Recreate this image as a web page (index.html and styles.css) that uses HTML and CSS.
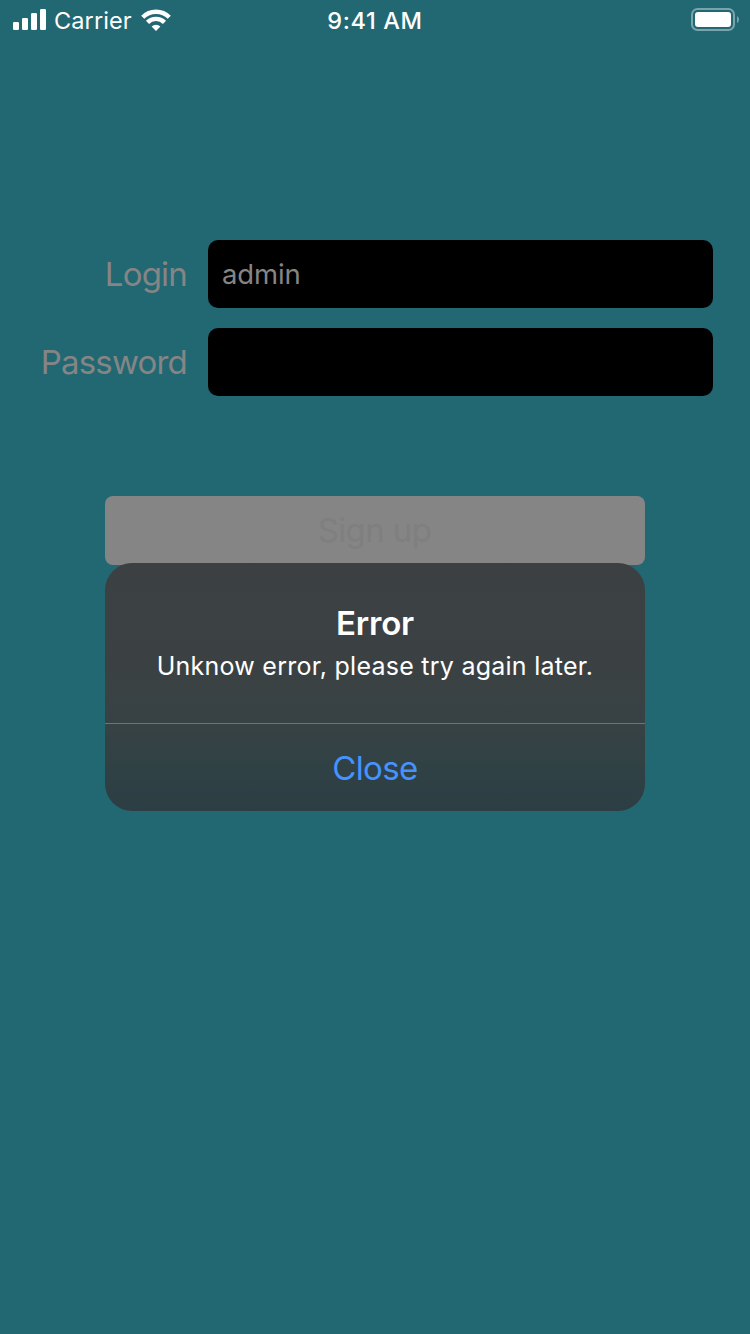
FILE: index.html
```html
<!DOCTYPE html>
<html lang="en">
<head>
<meta charset="utf-8">
<title>Sign up</title>
<link rel="stylesheet" href="styles.css">
</head>
<body>
<div class="screen">
  <header class="status">
    <div class="status-left">
      <svg class="signal" width="34" height="22" viewBox="0 0 34 22" fill="#fff">
        <rect x="0" y="13" width="6" height="8" rx="1.3"/>
        <rect x="9" y="9" width="6" height="12" rx="1.3"/>
        <rect x="18" y="4" width="6" height="17" rx="1.3"/>
        <rect x="27" y="0" width="6" height="21" rx="1.3"/>
      </svg>
      <span class="carrier">Carrier</span>
      <svg class="wifi" width="30" height="22" viewBox="0 0 30 22" fill="none" stroke="#fff" stroke-width="4.4">
        <path d="M1.7 8.2A18.8 18.8 0 0 1 28.3 8.2"/>
        <path d="M6.5 13.4A12 12 0 0 1 23.5 13.4"/>
        <path d="M15 22L10.6 17.6A6.2 6.2 0 0 1 19.4 17.6Z" fill="#fff" stroke="none"/>
      </svg>
    </div>
    <span class="time">9:41 AM</span>
    <svg class="battery" width="48" height="24" viewBox="0 0 48 24">
      <rect x="1" y="1" width="42" height="21" rx="5.5" fill="none" stroke="#7aa4ab" stroke-width="2"/>
      <rect x="4" y="4" width="36" height="15" rx="3" fill="#fff"/>
      <path d="M46 8Q48 9 48 11.5T46 15Z" fill="#7aa4ab"/>
    </svg>
  </header>
  <main class="form">
    <label class="label" for="login">Login</label>
    <input class="field" id="login" type="text" value="admin">
    <label class="label" for="password">Password</label>
    <input class="field" id="password" type="password">
  </main>
  <button class="signup" type="button">Sign up</button>
  <section class="alert" role="alertdialog">
    <div class="alert-body">
      <h1 class="alert-title">Error</h1>
      <p class="alert-message">Unknow error, please try again later.</p>
    </div>
    <button class="alert-close" type="button">Close</button>
  </section>
</div>
</body>
</html>
```
FILE: styles.css
```css
* { box-sizing: border-box; }
body { margin: 0; background: #226873; font-family: Inter, "Liberation Sans", sans-serif; }
.screen { position: relative; width: 750px; height: 1334px; overflow: hidden; display: flex; flex-direction: column; }
.status { height: 40px; display: grid; grid-template-columns: 1fr auto 1fr; align-items: center; color: #fff; font-size: 24px; line-height: 40px; }
.status-left { display: flex; align-items: center; padding-left: 13px; }
.signal, .wifi, .battery { margin-bottom: 2px; }
.carrier { margin-left: 7px; width: 80px; font-size: 23.5px; letter-spacing: 0.1px; white-space: nowrap; padding-top: 1px; }
.wifi { margin-left: 7px; }
.time { font-weight: 550; font-size: 23.5px; letter-spacing: 0.65px; padding-top: 1px; }
.battery { justify-self: end; margin-right: 11px; }
.form { margin-top: 200px; padding: 0 37px 0 0; display: grid; grid-template-columns: 187px 505px; column-gap: 21px; row-gap: 20px; }
.label { font-size: 33px; line-height: 69px; height: 68px; letter-spacing: -0.8px; text-align: right; color: #858585; }
.field { width: 505px; height: 68px; padding: 0 14px 1px; border: 0; border-radius: 10px; background: #000; color: #858585; font-family: inherit; font-size: 27.5px; letter-spacing: -0.15px; outline: 0; }
.signup { width: 540px; height: 69px; margin: 100px auto 0; padding: 0 1px 2px 0; border: 0; border-radius: 8px; background: #858585; color: #7f7f80; font-family: inherit; font-size: 33px; letter-spacing: -0.6px; }
.alert { position: absolute; left: 105px; top: 563px; width: 540px; height: 248px; border-radius: 27px; overflow: hidden; background: linear-gradient(#3c4042 0%, #3b4143 42%, #374244 65%, #2f4145 85%, #2c3e43 100%); color: #fff; }
.alert-body { height: 161px; padding-top: 40px; border-bottom: 1px solid #66797a; text-align: center; }
.alert-title { margin: 0; font-size: 33px; line-height: 40px; font-weight: 600; letter-spacing: -0.2px; }
.alert-message { margin: 4px 0 0; font-size: 25px; line-height: 38px; letter-spacing: 0.25px; white-space: nowrap; }
.alert-close { display: block; width: 100%; height: 87px; padding: 1px 0 0; border: 0; background: transparent; color: #4593ff; font-family: inherit; font-size: 33px; letter-spacing: -0.6px; }
```
